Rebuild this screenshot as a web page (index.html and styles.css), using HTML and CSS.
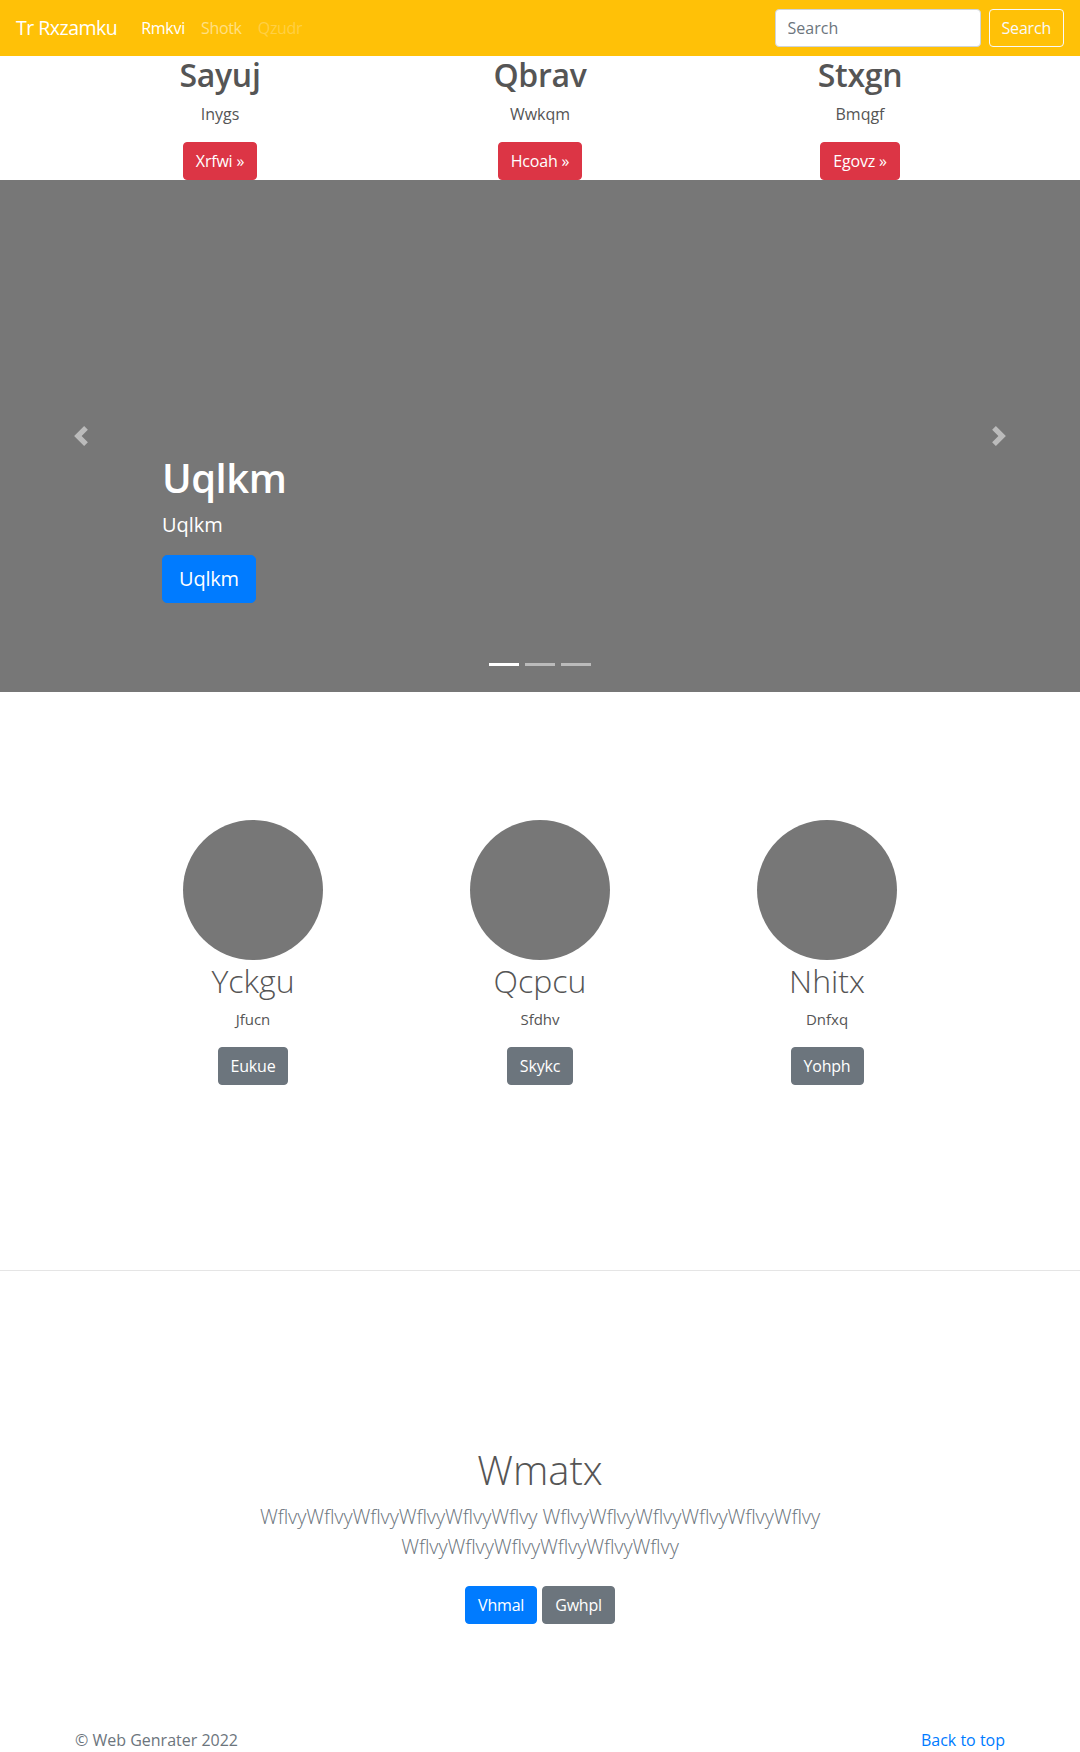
FILE: index.html
```html
<!DOCTYPE html>
<html lang="en">
<head>
<meta charset="utf-8">
<title>Tr Rxzamku</title>
<link rel="stylesheet" href="styles.css">
</head>
<body>
<nav class="navbar">
  <a class="brand" href="#">Tr Rxzamku</a>
  <ul class="nav">
    <li><a class="nav-link active" href="#">Rmkvi</a></li>
    <li><a class="nav-link" href="#">Shotk</a></li>
    <li><a class="nav-link disabled" href="#">Qzudr</a></li>
  </ul>
  <form class="search">
    <input class="search-input" type="text" placeholder="Search">
    <button class="btn btn-outline-light" type="button">Search</button>
  </form>
</nav>

<section class="features">
  <div class="feature">
    <h2 class="feature-title">Sayuj</h2>
    <p class="feature-text">Inygs</p>
    <a class="btn btn-danger" href="#">Xrfwi &raquo;</a>
  </div>
  <div class="feature">
    <h2 class="feature-title">Qbrav</h2>
    <p class="feature-text">Wwkqm</p>
    <a class="btn btn-danger" href="#">Hcoah &raquo;</a>
  </div>
  <div class="feature">
    <h2 class="feature-title">Stxgn</h2>
    <p class="feature-text">Bmqgf</p>
    <a class="btn btn-danger" href="#">Egovz &raquo;</a>
  </div>
</section>

<section class="carousel">
  <div class="carousel-caption">
    <h1 class="caption-title">Uqlkm</h1>
    <p class="caption-text">Uqlkm</p>
    <div class="caption-action"><a class="btn btn-lg btn-primary" href="#">Uqlkm</a></div>
  </div>
  <a class="carousel-control prev" href="#">
    <svg class="control-icon" viewBox="0 0 8 8"><path d="M5.25 0l-4 4 4 4 1.5-1.5L4.25 4l2.5-2.5L5.25 0z"/></svg>
  </a>
  <a class="carousel-control next" href="#">
    <svg class="control-icon" viewBox="0 0 8 8"><path d="M2.75 0l-1.5 1.5L3.75 4l-2.5 2.5L2.75 8l4-4-4-4z"/></svg>
  </a>
  <ol class="indicators">
    <li class="indicator active"></li>
    <li class="indicator"></li>
    <li class="indicator"></li>
  </ol>
</section>

<section class="people">
  <div class="person">
    <div class="avatar"></div>
    <h2 class="person-name">Yckgu</h2>
    <p class="person-text">Jfucn</p>
    <a class="btn btn-secondary" href="#">Eukue</a>
  </div>
  <div class="person">
    <div class="avatar"></div>
    <h2 class="person-name">Qcpcu</h2>
    <p class="person-text">Sfdhv</p>
    <a class="btn btn-secondary" href="#">Skykc</a>
  </div>
  <div class="person">
    <div class="avatar"></div>
    <h2 class="person-name">Nhitx</h2>
    <p class="person-text">Dnfxq</p>
    <a class="btn btn-secondary" href="#">Yohph</a>
  </div>
</section>

<hr class="divider">

<section class="jumbotron">
  <div class="jumbo-inner">
    <h1 class="jumbo-title">Wmatx</h1>
    <p class="lead">WflvyWflvyWflvyWflvyWflvyWflvy WflvyWflvyWflvyWflvyWflvyWflvy WflvyWflvyWflvyWflvyWflvyWflvy</p>
    <div class="jumbo-actions">
      <a class="btn btn-primary" href="#">Vhmal</a>
      <a class="btn btn-secondary" href="#">Gwhpl</a>
    </div>
  </div>
</section>

<footer class="footer">
  <div class="footer-inner">
    <p class="copyright">&copy; Web Genrater 2022</p>
    <a class="back-top" href="#">Back to top</a>
  </div>
</footer>
</body>
</html>
```

FILE: styles.css
```css
* { box-sizing: border-box; }

body {
  margin: 0;
  font-family: "Open Sans", "Noto Sans", sans-serif;
  font-size: 16px;
  line-height: 1.5;
  color: #555;
  background: #fff;
}

a { text-decoration: none; }

/* Navbar */
.navbar {
  display: flex;
  align-items: center;
  height: 56px;
  padding: 0 16px;
  background: #ffc107;
}
.brand {
  font-size: 19.5px;
  line-height: 30px;
  letter-spacing: -0.5px;
  color: #fff;
  margin-right: 16px;
}
.nav {
  display: flex;
  flex: 1;
  list-style: none;
  margin: 0;
  padding: 0;
}
.nav-link {
  display: block;
  padding: 8px;
  font-size: 16px;
  line-height: 24px;
  letter-spacing: -0.3px;
  color: rgba(255, 255, 255, 0.5);
}
.nav-link.active { color: #fff; }
.nav-link.disabled { color: rgba(255, 255, 255, 0.25); }

.search {
  display: flex;
  align-items: center;
  margin: 0;
}
.search-input {
  width: 206px;
  height: 38px;
  margin-right: 8px;
  padding: 6px 12px;
  font-family: inherit;
  font-size: 16px;
  color: #495057;
  background: #fff;
  border: 1px solid #ced4da;
  border-radius: 4px;
}
.search-input::placeholder { color: #6c757d; }

/* Buttons */
.btn {
  display: inline-block;
  padding: 6px 12px;
  font-family: inherit;
  font-size: 16px;
  line-height: 24px;
  letter-spacing: -0.2px;
  border: 1px solid transparent;
  border-radius: 4px;
  color: #fff;
  text-align: center;
  background: transparent;
}
.btn-lg {
  padding: 8px 16px;
  font-size: 20px;
  line-height: 30px;
  border-radius: 5px;
}
.btn-outline-light { color: #f8f9fa; border-color: #f8f9fa; }
.btn-danger { background: #dc3545; border-color: #dc3545; }
.btn-primary { background: #007bff; border-color: #007bff; }
.btn-secondary { background: #6c757d; border-color: #6c757d; }

/* Top features */
.features {
  width: 960px;
  margin: 0 auto;
  display: grid;
  grid-template-columns: repeat(3, 1fr);
}
.feature {
  display: flex;
  flex-direction: column;
  align-items: center;
}
.feature-title {
  margin: 0 0 8px;
  font-size: 32px;
  font-weight: 600;
  line-height: 1.2;
  letter-spacing: -0.3px;
}
.feature-text {
  margin: 0 0 16px;
  line-height: 24px;
}

/* Carousel */
.carousel {
  position: relative;
  height: 512px;
  background: #777;
}
.carousel-caption {
  position: absolute;
  left: 15%;
  right: 15%;
  bottom: 48px;
  padding: 20px 0;
  color: #fff;
}
.caption-title {
  margin: 0 0 8px;
  font-size: 40px;
  font-weight: 600;
  line-height: 1.2;
  letter-spacing: -0.5px;
}
.caption-text {
  margin: 0 0 15px;
  font-size: 20px;
  line-height: 30px;
}
.caption-action { margin-bottom: 21px; display: flex; }
.carousel-control {
  position: absolute;
  top: 0;
  bottom: 0;
  width: 15%;
  display: flex;
  align-items: center;
  justify-content: center;
  opacity: 0.5;
}
.carousel-control.prev { left: 0; }
.carousel-control.next { right: 0; }
.control-icon {
  width: 20px;
  height: 20px;
  fill: #fff;
}
.indicators {
  position: absolute;
  left: 0;
  right: 0;
  bottom: 16px;
  display: flex;
  justify-content: center;
  list-style: none;
  margin: 0;
  padding: 0;
}
.indicator {
  width: 30px;
  height: 23px;
  margin: 0 3px;
  border-top: 10px solid transparent;
  border-bottom: 10px solid transparent;
  background: #fff;
  background-clip: padding-box;
  opacity: 0.5;
}
.indicator.active { opacity: 1; }

/* People */
.people {
  display: grid;
  grid-template-columns: repeat(3, 287px);
  justify-content: center;
  padding-top: 128px;
}
.person {
  display: flex;
  flex-direction: column;
  align-items: center;
}
.avatar {
  width: 140px;
  height: 140px;
  border-radius: 50%;
  background: #777;
}
.person-name {
  margin: 2px 0 6px;
  font-size: 32px;
  font-weight: 300;
  line-height: 38.4px;
}
.person-text {
  margin: 0 0 16px;
  font-size: 15px;
  line-height: 24px;
}

.divider {
  margin: 185px 0 0;
  border: 0;
  border-top: 1px solid rgba(0, 0, 0, 0.1);
  height: 0;
}

/* Jumbotron */
.jumbotron {
  padding: 175px 0 48px;
  text-align: center;
}
.jumbo-inner {
  max-width: 640px;
  margin: 0 auto;
  padding: 0 15px;
}
.jumbo-title {
  margin: 0 0 8px;
  font-size: 40px;
  font-weight: 300;
  line-height: 1.2;
}
.lead {
  margin: 0 0 24px;
  font-size: 20px;
  font-weight: 300;
  line-height: 30px;
  letter-spacing: -0.1px;
  color: #6c757d;
}
.jumbo-actions {
  display: flex;
  justify-content: center;
  gap: 5px;
  margin: 8px 0;
}

/* Footer */
.footer {
  padding: 48px 0;
}
.footer-inner {
  width: 960px;
  margin: 0 auto;
  padding: 0 15px;
  display: flex;
  justify-content: space-between;
  line-height: 24px;
}
.copyright {
  margin: 0 0 16px;
  color: #6c757d;
}
.back-top { color: #007bff; }
```
